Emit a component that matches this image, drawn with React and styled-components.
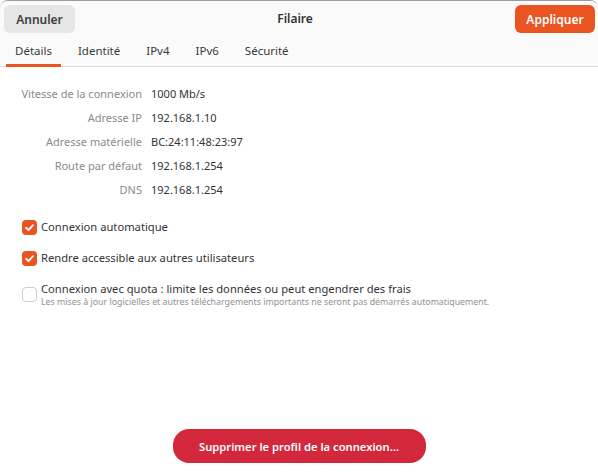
import styled, { createGlobalStyle } from "styled-components";

const Global = createGlobalStyle`
  html, body {
    margin: 0;
    padding: 0;
    background: #ffffff;
  }
  body {
    font-family: "Noto Sans", "Liberation Sans", sans-serif;
    color: #333333;
  }
`;

const Window = styled.div`
  width: 598px;
  height: 474px;
  display: flex;
  flex-direction: column;
  background: #ffffff;
  border-top: 1px solid #9c9c9c;
  border-radius: 8px 8px 0 0;
  box-sizing: border-box;
  overflow: hidden;
`;

const Header = styled.div`
  height: 36px;
  display: flex;
  align-items: flex-start;
  justify-content: space-between;
  padding: 4px 3px 0 4px;
  background: #fafafa;
  box-sizing: border-box;
`;

const HeaderButton = styled.button`
  height: 28px;
  width: ${(p) => p.$w}px;
  border: none;
  border-radius: 6px;
  font-family: inherit;
  font-size: 12px;
  font-weight: 600;
  background: ${(p) => (p.$primary ? "#e95420" : "#e6e6e6")};
  color: ${(p) => (p.$primary ? "#ffffff" : "#3d3d3d")};
  padding: 0;
`;

const Title = styled.div`
  font-size: 12px;
  font-weight: 600;
  color: #333;
  line-height: 28px;
`;

const Tabs = styled.div`
  height: 30px;
  display: flex;
  gap: 8px;
  padding-left: 6px;
  background: #fafafa;
  border-bottom: 1px solid #dcdcdc;
  box-sizing: border-box;
`;

const Tab = styled.div`
  padding: 0 9px;
  font-size: 11.5px;
  color: #3a3a3a;
  display: flex;
  align-items: center;
  box-sizing: border-box;
  border-bottom: 3px solid ${(p) => (p.$active ? "#e95420" : "transparent")};
  margin-bottom: -1px;
`;

const Content = styled.div`
  flex: 1;
  display: flex;
  flex-direction: column;
`;

const InfoGrid = styled.div`
  display: grid;
  grid-template-columns: 123px auto;
  column-gap: 9px;
  grid-auto-rows: 24px;
  align-items: center;
  padding: 14px 0 0 19px;
  font-size: 11px;
`;

const Label = styled.div`
  text-align: right;
  color: #8a8a8a;
  white-space: nowrap;
`;

const Value = styled.div`
  color: #333;
  white-space: nowrap;
`;

const Checks = styled.div`
  display: flex;
  flex-direction: column;
  gap: 15px;
  padding: 18px 0 0 22px;
`;

const CheckRow = styled.div`
  display: flex;
  align-items: ${(p) => (p.$multi ? "flex-start" : "center")};
  gap: 4px;
`;

const Box = styled.span`
  width: 15px;
  height: 15px;
  border-radius: 4px;
  box-sizing: border-box;
  flex: none;
  display: flex;
  align-items: center;
  justify-content: center;
  background: ${(p) => (p.$checked ? "#e95420" : "#ffffff")};
  border: ${(p) => (p.$checked ? "none" : "1px solid #cfcfcf")};
  margin-top: ${(p) => (p.$multi ? "6px" : "0")};
`;

const CheckText = styled.div`
  display: flex;
  flex-direction: column;
`;

const CheckLabel = styled.span`
  font-size: 11.2px;
  color: #333;
  line-height: 16px;
`;

const SubText = styled.span`
  font-size: 8.8px;
  color: #909090;
  line-height: 11px;
`;

const Footer = styled.div`
  margin-top: auto;
  display: flex;
  justify-content: center;
  padding-bottom: 11px;
`;

const DeleteButton = styled.button`
  width: 253px;
  height: 34px;
  border: none;
  border-radius: 16px;
  background: #d3283c;
  color: #ffffff;
  font-family: inherit;
  font-size: 11.2px;
  font-weight: 600;
`;

const Check = () => (
  <svg width="11" height="11" viewBox="0 0 12 12">
    <path d="M2.2 6.3 L4.9 8.9 L9.8 3.4" fill="none" stroke="#fff" strokeWidth="2" strokeLinecap="round" strokeLinejoin="round" />
  </svg>
);

const rows = [
  ["Vitesse de la connexion", "1000 Mb/s"],
  ["Adresse IP", "192.168.1.10"],
  ["Adresse matérielle", "BC:24:11:48:23:97"],
  ["Route par défaut", "192.168.1.254"],
  ["DNS", "192.168.1.254"],
];

const tabs = ["Détails", "Identité", "IPv4", "IPv6", "Sécurité"];

export default function App() {
  return (
    <>
      <Global />
      <Window>
        <Header>
          <HeaderButton $w={71}>Annuler</HeaderButton>
          <Title>Filaire</Title>
          <HeaderButton $w={80} $primary>Appliquer</HeaderButton>
        </Header>
        <Tabs>
          {tabs.map((t, i) => (
            <Tab key={t} $active={i === 0}>{t}</Tab>
          ))}
        </Tabs>
        <Content>
          <InfoGrid>
            {rows.map(([l, v]) => [
              <Label key={l}>{l}</Label>,
              <Value key={l + "v"}>{v}</Value>,
            ])}
          </InfoGrid>
          <Checks>
            <CheckRow>
              <Box $checked><Check /></Box>
              <CheckLabel>Connexion automatique</CheckLabel>
            </CheckRow>
            <CheckRow>
              <Box $checked><Check /></Box>
              <CheckLabel>Rendre accessible aux autres utilisateurs</CheckLabel>
            </CheckRow>
            <CheckRow $multi>
              <Box $multi />
              <CheckText>
                <CheckLabel>Connexion avec quota : limite les données ou peut engendrer des frais</CheckLabel>
                <SubText>Les mises à jour logicielles et autres téléchargements importants ne seront pas démarrés automatiquement.</SubText>
              </CheckText>
            </CheckRow>
          </Checks>
          <Footer>
            <DeleteButton>Supprimer le profil de la connexion…</DeleteButton>
          </Footer>
        </Content>
      </Window>
    </>
  );
}
